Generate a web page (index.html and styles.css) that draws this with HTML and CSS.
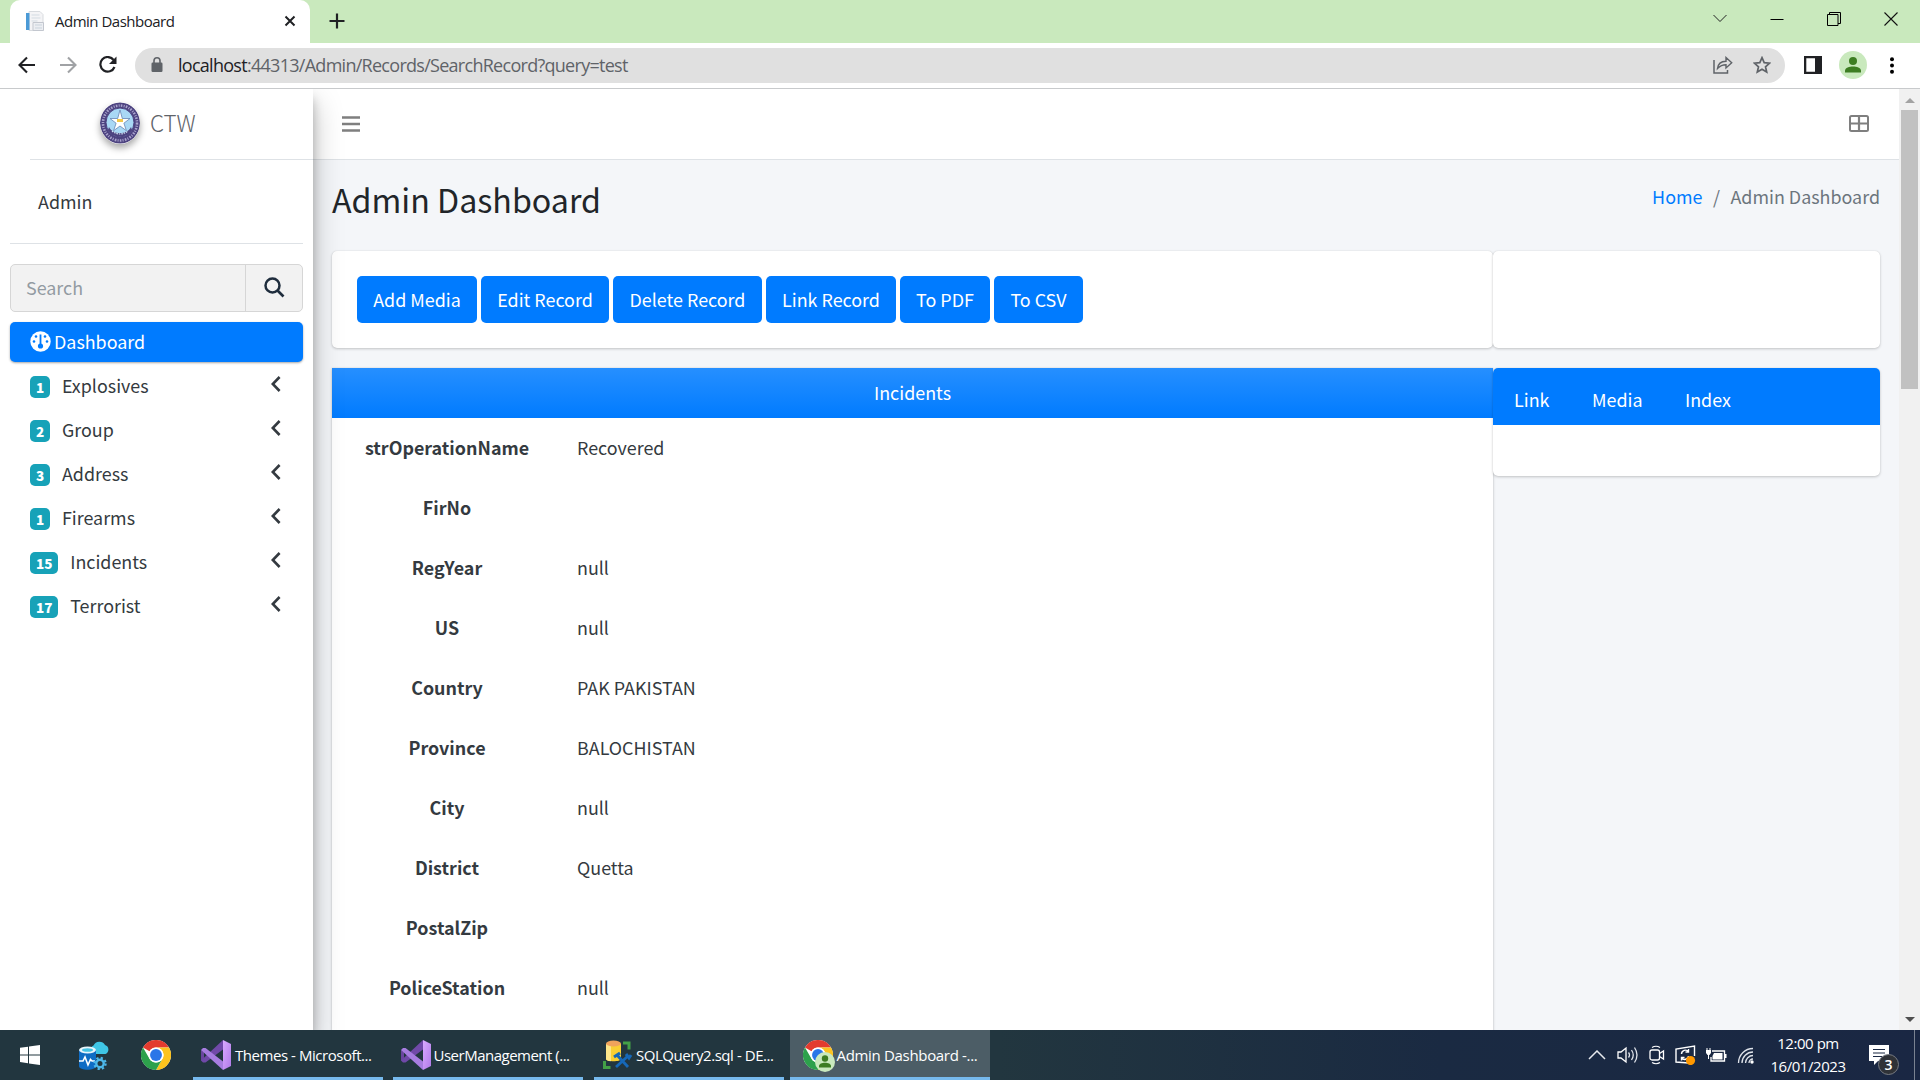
FILE: index.html
```html
<!DOCTYPE html>
<html lang="en">
<head>
<meta charset="utf-8">
<title>Admin Dashboard</title>
<link rel="stylesheet" href="styles.css">
</head>
<body>
<svg class="defs" width="0" height="0">
  <defs>
    <linearGradient id="vs" x1="0" y1="0" x2="1" y2="1"><stop offset="0" stop-color="#d9a9ff"/><stop offset="1" stop-color="#b07ae8"/></linearGradient>
    <symbol id="chrome" viewBox="0 0 48 48">
      <circle cx="24" cy="24" r="24" fill="#fff"/>
      <path d="M3.2 12A24 24 0 0 1 44.8 12H24a12 12 0 0 0-10.4 6z" fill="#e33b2e"/>
      <path d="M44.8 12A24 24 0 0 1 24 48l10.4-18A12 12 0 0 0 34.4 18 12 12 0 0 0 24 12z" fill="#fcc31e"/>
      <path d="M24 48A24 24 0 0 1 3.2 12l10.4 18A12 12 0 0 0 34.4 30z" fill="#2da14c"/>
      <circle cx="24" cy="24" r="12" fill="#fff"/><circle cx="24" cy="24" r="9.5" fill="#2a76e8"/>
    </symbol>
    <symbol id="vstudio" viewBox="0 0 30 30">
      <path d="M0 10l3 2v7l-3 2z" fill="#6a45a0"/>
      <path d="M0 20.500L22 0v9.500L4.500 22.500 2 22.500z" fill="#7049a8"/>
      <path d="M0 10l2-2h2.500L22 21.500V30z" fill="#a77de0"/>
      <path d="M22 0l8 4v22l-8 4z" fill="url(#vs)"/>
    </symbol>
    <symbol id="chev" viewBox="0 0 10 16"><path d="M8.6 1L1.8 8l6.8 7" fill="none" stroke="#343a40" stroke-width="2.6"/></symbol>
  </defs>
</svg>

<header class="tabstrip">
  <div class="tab">
    <svg class="favicon" width="20" height="20" viewBox="0 0 20 20"><path d="M4 .5h11l3 3v16H4z" fill="#f4f4f6" stroke="#d8dbdf"/><path d="M1 2h3.500v17H1z" fill="#4b9ad6"/><path d="M6.500 4h8M6.500 7h9M6.500 10h6" stroke="#d3dbe2"/><path d="M8 11.500h10.500v8H8z" fill="#eceef2" stroke="#c3c7cf"/><path d="M10 14h7M10 17h7" stroke="#c9d3dc"/></svg>
    <span class="tab-title">Admin Dashboard</span>
    <svg width="12" height="12" viewBox="0 0 12 12"><path d="M1.500 1.500l9 9m0-9l-9 9" stroke="#202124" stroke-width="2"/></svg>
  </div>
  <svg class="newtab" width="16" height="16" viewBox="0 0 16 16"><path d="M8 .5v15M.5 8h15" stroke="#202124" stroke-width="2.200"/></svg>
  <div class="winbtns">
    <svg width="14" height="9" viewBox="0 0 14 9"><path d="M.5 1l6.500 6.500L13.500 1" fill="none" stroke="#222"/></svg>
    <svg width="14" height="14" viewBox="0 0 14 14"><path d="M.5 7.500h13" stroke="#000"/></svg>
    <svg width="14" height="14" viewBox="0 0 14 14"><path d="M.5 2.500h10.500v11H.5zM2.500 2.500v-2h11v11h-2.500" fill="none" stroke="#000"/></svg>
    <svg width="14" height="14" viewBox="0 0 14 14"><path d="M.5.5l13 13m0-13l-13 13" stroke="#111" stroke-width="1.100"/></svg>
  </div>
</header>

<div class="toolbar">
  <svg width="18" height="18" viewBox="0 0 18 18"><path d="M17 9H2M9 1.500L1.500 9 9 16.500" fill="none" stroke="#202124" stroke-width="2.100"/></svg>
  <svg width="18" height="18" viewBox="0 0 18 18"><path d="M1 9h15M9 1.500L16.500 9 9 16.500" fill="none" stroke="#a0a2a5" stroke-width="2.100"/></svg>
  <svg class="reload" width="18" height="18" viewBox="0 0 18 18"><path d="M15.500 11A7.300 7.300 0 1 1 14.600 4" fill="none" stroke="#202124" stroke-width="2.200"/><path d="M17.500.5v7.500H10z" fill="#202124"/></svg>
  <div class="omnibox">
    <svg width="12" height="16" viewBox="0 0 12 16"><rect x=".5" y="5.500" width="11" height="9.500" rx="1.200" fill="#5f6368"/><path d="M3 6V3.800a3 3 0 0 1 6 0V6" fill="none" stroke="#5f6368" stroke-width="1.600"/></svg>
    <span class="url"><b>localhost</b>:44313/Admin/Records/SearchRecord?query=test</span>
    <svg class="share" width="20" height="18" viewBox="0 0 20 18"><path d="M1 4v13h13.500v-3" fill="none" stroke="#5f6368" stroke-width="1.500"/><path d="M4.500 12.500C5 8 8 5.500 13 5.300V1.500l5.700 5.200-5.700 5.200V8.800C9 8.800 7 10 4.500 12.500z" fill="none" stroke="#5f6368" stroke-width="1.400"/></svg>
    <svg width="18" height="18" viewBox="0 0 18 18"><path d="M9 1.700l2.200 5 5.400.5-4.100 3.600 1.200 5.300L9 13.300l-4.700 2.800 1.200-5.300L1.400 7.200l5.400-.5z" fill="none" stroke="#5f6368" stroke-width="1.700"/></svg>
  </div>
  <svg class="panel" width="18" height="18" viewBox="0 0 18 18"><path d="M0 0h18v18H0zM2.300 2.300v13.400h8.700V2.300z" fill="#202124" fill-rule="evenodd"/></svg>
  <svg class="user" width="28" height="28" viewBox="0 0 28 28"><circle cx="14" cy="14" r="14" fill="#c9e9bd"/><circle cx="14" cy="10" r="4" fill="#3d7d22"/><path d="M6 21.500v-1.700c0-3 4.500-4.300 8-4.300s8 1.300 8 4.300v1.700z" fill="#3d7d22"/></svg>
  <svg class="dots" width="4" height="17" viewBox="0 0 4 17"><circle cx="2" cy="2.200" r="2"/><circle cx="2" cy="8.500" r="2"/><circle cx="2" cy="14.800" r="2"/></svg>
</div>

<div class="viewport">
  <aside class="sidebar">
    <div class="brand">
      <svg class="logo" width="40" height="42" viewBox="0 0 40 42">
        <ellipse cx="20" cy="21" rx="20" ry="20.500" fill="#4d4380"/>
        <ellipse cx="20" cy="21" rx="17" ry="17.500" fill="none" stroke="#a9a3cc" stroke-width="2.600" stroke-dasharray="1.600 1.300 1 1.200"/>
        <ellipse cx="20" cy="20.500" rx="14" ry="14.500" fill="#a9d8f5" stroke="#4d4380"/>
        <path d="M9 25c4 8 18 8 22 0l1 3c-5 9-19 9-24 0z" fill="#4d4380"/>
        <path d="M12 29c5 4 11 4 16 0" fill="none" stroke="#d5e7f5" stroke-width="1.200" stroke-dasharray="1.500 1"/>
        <path d="M20 8l2.300 8.500H30l-6.100 4.700 2.500 7.500L20 24l-6.400 4.700 2.500-7.500L10 16.500h7.700z" fill="#fff" stroke="#6686b5" stroke-width=".8"/>
        <path d="M17 17h6v3h-6z" fill="#f1c84c"/>
      </svg>
      <span>CTW</span>
    </div>
    <div class="side-body">
      <div class="who">Admin</div>
      <div class="search"><span>Search</span><i><svg width="21" height="21" viewBox="0 0 21 21"><circle cx="8.500" cy="8.500" r="7" fill="none" stroke="#1f2d3d" stroke-width="2.500"/><path d="M13.500 13.500l6 6" stroke="#1f2d3d" stroke-width="2.700"/></svg></i></div>
      <nav>
        <a class="item active"><svg width="21" height="21" viewBox="0 0 21 21"><circle cx="10.500" cy="10.500" r="10.200" fill="#fff"/><g fill="#007bff"><circle cx="6" cy="5.500" r="1.300"/><circle cx="15" cy="5.500" r="1.300"/><circle cx="4" cy="10.500" r="1.300"/><circle cx="17" cy="10.500" r="1.300"/><circle cx="10.500" cy="15" r="2.600"/><path d="M9.600 3.500h1.800V14H9.600z"/></g></svg><span>Dashboard</span></a>
        <a class="item"><em>1</em><span>Explosives</span><svg class="chev"><use href="#chev"/></svg></a>
        <a class="item"><em>2</em><span>Group</span><svg class="chev"><use href="#chev"/></svg></a>
        <a class="item"><em>3</em><span>Address</span><svg class="chev"><use href="#chev"/></svg></a>
        <a class="item"><em>1</em><span>Firearms</span><svg class="chev"><use href="#chev"/></svg></a>
        <a class="item"><em>15</em><span>Incidents</span><svg class="chev"><use href="#chev"/></svg></a>
        <a class="item"><em>17</em><span>Terrorist</span><svg class="chev"><use href="#chev"/></svg></a>
      </nav>
    </div>
  </aside>

  <main class="main">
    <div class="navbar">
      <svg width="18" height="16" viewBox="0 0 18 16"><path d="M.5 1.500h17M.5 8h17M.5 14.500h17" stroke="#7f7f7f" stroke-width="2.500" stroke-linecap="round"/></svg>
      <svg width="20" height="17" viewBox="0 0 20 17"><rect x="1" y="1" width="18" height="15" rx="1.500" fill="none" stroke="#7f7f7f" stroke-width="2"/><path d="M10 1v15M1 8.500h18" stroke="#7f7f7f" stroke-width="2.200"/></svg>
    </div>
    <div class="content">
      <div class="heading">
        <h1>Admin Dashboard</h1>
        <div class="crumbs"><a>Home</a><i>/</i><span>Admin Dashboard</span></div>
      </div>
      <div class="row top">
        <section class="card actions">
          <button>Add Media</button><button>Edit Record</button><button>Delete Record</button><button>Link Record</button><button>To PDF</button><button>To CSV</button>
        </section>
        <section class="card"></section>
      </div>
      <div class="row">
        <section class="card record">
          <h2>Incidents</h2>
          <dl>
            <dt>strOperationName</dt><dd>Recovered</dd>
            <dt>FirNo</dt><dd></dd>
            <dt>RegYear</dt><dd>null</dd>
            <dt>US</dt><dd>null</dd>
            <dt>Country</dt><dd>PAK PAKISTAN</dd>
            <dt>Province</dt><dd>BALOCHISTAN</dd>
            <dt>City</dt><dd>null</dd>
            <dt>District</dt><dd>Quetta</dd>
            <dt>PostalZip</dt><dd></dd>
            <dt>PoliceStation</dt><dd>null</dd>
          </dl>
        </section>
        <section class="card links">
          <div class="links-head"><a>Link</a><a>Media</a><a>Index</a></div>
        </section>
      </div>
    </div>
  </main>

  <div class="scrollbar">
    <svg width="10" height="5" viewBox="0 0 10 5"><path d="M0 5l5-5 5 5z" fill="#a3a3a3"/></svg>
    <div class="thumb"></div>
    <svg width="10" height="5" viewBox="0 0 10 5"><path d="M0 0l5 5 5-5z" fill="#505050"/></svg>
  </div>
</div>

<footer class="taskbar">
  <div class="pinned">
    <svg width="20" height="20" viewBox="0 0 20 20"><path d="M0 2.800L8 1.700v7.700H0zM9 1.500L20 0v9.400H9zM0 10.400h8v7.800l-8-1.100zM9 10.400h11V20L9 18.400z" fill="#fff"/></svg>
    <svg width="31" height="30" viewBox="0 0 31 30"><path d="M15 14a4.500 4.500 0 0 1-.5-8.500A6.500 6.500 0 0 1 26 5a4.800 4.800 0 0 1 .5 9z" fill="#3fc6e6"/><path d="M0 10v16c0 5 17 5 17 0V10z" fill="#0f6cc4"/><ellipse cx="8.500" cy="10" rx="8.500" ry="3.500" fill="#e8f5fb"/><ellipse cx="8.500" cy="10" rx="5.500" ry="1.800" fill="#45c2e4"/><path d="M0 21h4l2-4 3 8 2.500-5.500L13 21h3" fill="none" stroke="#fff" stroke-width="1.600"/><circle cx="21" cy="23.500" r="3.700" fill="#22363f" stroke="#4db8ea" stroke-width="2.400"/><circle cx="21" cy="23.500" r="5.600" fill="none" stroke="#4db8ea" stroke-width="2.200" stroke-dasharray="2.200 2.200"/></svg>
    <svg width="30" height="30"><use href="#chrome"/></svg>
  </div>
  <div class="task"><svg width="30" height="30"><use href="#vstudio"/></svg><span class="t1">Themes - Microsoft...</span></div>
  <div class="task second"><svg width="30" height="30"><use href="#vstudio"/></svg><span class="t2">UserManagement (...</span></div>
  <div class="task"><svg width="31" height="34" viewBox="0 0 31 34"><path d="M21 5h6v6.500M8.500 29.500H2.500V23" fill="none" stroke="#43a047" stroke-width="3"/><path d="M4 6v15c0 3 15 3 15 0V6z" fill="#f9cf33"/><path d="M4 6v15c0 1 2 2 5 2.200V6z" fill="#fde58a"/><ellipse cx="11.500" cy="5.500" rx="7.500" ry="3" fill="#f0a35c"/><path d="M14 29L26 18M15 17l11 12" stroke="#1668b8" stroke-width="2.800"/><path d="M12 19l6-4M24 16l3 4 2-3" stroke="#1668b8" stroke-width="3" fill="none"/></svg><span class="t3">SQLQuery2.sql - DE...</span></div>
  <div class="task current"><svg width="33" height="34" viewBox="0 0 33 34"><use href="#chrome" x="0" y="2" width="30" height="30"/><circle cx="22" cy="24" r="10" fill="#c9e9bd"/><circle cx="22" cy="20.500" r="3.200" fill="#3d7d22"/><path d="M16 29.500v-1.500c0-4.500 12-4.500 12 0v1.500z" fill="#3d7d22"/></svg><span class="t4">Admin Dashboard -...</span></div>
  <div class="tray">
    <svg width="18" height="10" viewBox="0 0 18 10"><path d="M1 9l8-8 8 8" fill="none" stroke="#e8eaee" stroke-width="1.500"/></svg>
    <svg width="22" height="18" viewBox="0 0 22 18"><path d="M1 6h3l5-4v14l-5-4H1z" fill="none" stroke="#fff" stroke-width="1.300"/><path d="M11.500 6.500q2 2.500 0 5M14.500 4q3.500 5 0 10M17.500 1.500q5 7.500 0 15" fill="none" stroke="#dfe3ea" stroke-width="1.300"/></svg>
    <svg width="16" height="20" viewBox="0 0 16 20"><path d="M3 2.500Q7 0 11 2.500M3 17.500q4 2.500 8 0" fill="none" stroke="#fff" stroke-width="1.200"/><rect x="1" y="5" width="9.500" height="10" rx="2" fill="none" stroke="#fff" stroke-width="1.300"/><path d="M10.500 8.500L14.500 6v8l-4-2.500" fill="none" stroke="#fff" stroke-width="1.300"/></svg>
    <svg width="21" height="20" viewBox="0 0 21 20"><path d="M14 18L1 17V4l18.500-3v10" fill="none" stroke="#fff" stroke-width="1.400"/><path d="M6.500 9a4 4 0 0 1 7-2.500M13.500 4v3h-3M13.500 11a4 4 0 0 1-7 2M6.500 15.500v-3h3" fill="none" stroke="#fff" stroke-width="1.400"/><circle cx="15.500" cy="15.500" r="4.600" fill="#ff9800"/></svg>
    <svg width="21" height="14" viewBox="0 0 21 14"><path d="M6 3h12.500v10H5V9" fill="none" stroke="#fff" stroke-width="1.300"/><path d="M8 5h8.500v6.500H6.500V8zM19 6h1.500v4H19zM0 2h5v3L3.500 7h-2L0 5zM.5 0h1v2h-1zM3.500 0h1v2h-1zM2 7h1v4H2z" fill="#fff"/></svg>
    <svg width="18" height="17" viewBox="0 0 18 17"><path d="M1.500 16C1.500 8 8 1.500 16 1.500M5 16C5 10 10 5 16 5M8.500 16c0-4 3.500-7.500 7.500-7.500M12 16c0-2 1.500-4 4-4" fill="none" stroke="#dfe3ea" stroke-width="1.300"/><circle cx="15" cy="15" r="1.700" fill="#fff"/></svg>
    <div class="clock"><span>12:00 pm</span><span>16/01/2023</span></div>
    <svg width="32" height="30" viewBox="0 0 32 30"><path d="M0 0h20v16H9l-4 4v-4H0z" fill="#fff"/><path d="M4 4.500h12M4 8h12M4 11.500h9" stroke="#1a2843" stroke-width="1.200"/><circle cx="19.500" cy="19.500" r="10" fill="#2f3237" stroke="#777b82"/><text x="19.500" y="25" class="count">3</text></svg>
    <i class="peek"></i>
  </div>
</footer>
</body>
</html>
```
FILE: styles.css
```css
* { box-sizing: border-box; }
body { margin: 0; width: 1920px; height: 1080px; overflow: hidden; display: flex; flex-direction: column; background: #fff; font-family: "Noto Sans CJK SC", sans-serif; font-size: 17.900px; color: #212529; }
svg { display: block; flex: none; }
i, em { font-style: normal; }
.defs { position: absolute; }

/* browser chrome */
.tabstrip { height: 43px; flex: none; display: flex; background: #c9e9bd; padding-left: 10px; font-family: "Open Sans", sans-serif; }
.tab { width: 300px; height: 43px; background: #fff; border-radius: 10px 10px 0 0; display: flex; align-items: center; padding: 0 14px 1px 15px; }
.tab-title { flex: 1; margin: -1px 0 0 10px; font-size: 15px; letter-spacing: -.5px; white-space: nowrap; color: #202124; }
.newtab { margin: 13px 0 0 19px; }
.winbtns { margin-left: auto; height: 37px; display: flex; align-items: center; gap: 43px; padding-right: 22px; }
.toolbar { height: 46px; flex: none; display: flex; align-items: center; border-bottom: 1px solid #c8cacc; padding: 0 26px 1px 18px; gap: 23px; }
.reload { margin: 0 1px 0 -1px; }
.omnibox { width: 1650px; height: 35px; border-radius: 18px; background: #e0e0e0; display: flex; align-items: center; padding: 0 14px 0 16px; margin-left: -6px; flex: none; }
.url { font-family: "Open Sans", sans-serif; font-size: 18px; letter-spacing: -.72px; color: #5f6368; margin-left: 15px; white-space: nowrap; }
.url b { font-weight: 400; color: #202124; }
.share { margin: 0 20px 0 auto; }
.panel { margin-left: -4px; }
.user { margin-left: -6px; }

/* page */
.viewport { height: 941px; flex: none; display: flex; overflow: hidden; }
.sidebar { width: 313px; background: #fff; box-shadow: 0 14px 28px rgba(0,0,0,.25), 0 10px 10px rgba(0,0,0,.22); z-index: 2; clip-path: inset(0 -60px 0 0); }
.brand { height: 71px; margin-left: 30px; border-bottom: 1px solid #dee2e6; display: flex; align-items: center; padding: 0 0 3px 70px; font-size: 22.400px; line-height: 40px; font-weight: 300; color: #5f646a; }
.brand span { margin-top: -2px; }
.logo { border-radius: 50%; box-shadow: 0 4px 7px rgba(0,0,0,.35); margin-right: 10px; }
.side-body { padding: 0 10px; }
.who { height: 84px; padding-left: 28px; line-height: 82px; border-bottom: 1px solid #dee2e6; color: #343a40; }
.search { margin-top: 20px; height: 48px; border: 1px solid #d6d6d6; border-radius: 5px; background: #f2f2f2; display: flex; line-height: 45px; color: #939ba2; }
.search span { flex: 1; padding-left: 15px; }
.search i { width: 57px; border-left: 1px solid #d6d6d6; display: flex; align-items: center; padding: 0 0 1px 18px; }
nav { margin-top: 10px; display: flex; flex-direction: column; gap: 4px; }
.item { height: 40px; display: flex; align-items: center; padding: 0 22px 0 20px; color: #343a40; line-height: 36px; }
.item > span { margin-top: -3px; }
.item em { height: 22px; margin-top: 2px; padding: 0 6px; border-radius: 5px; background: #17a2b8; color: #fff; font-size: 13.500px; font-weight: 900; line-height: 23px; margin-right: 11.700px; min-width: 20px; text-align: center; }
.item.active { background: #007bff; color: #fff; border-radius: 5px; box-shadow: 0 1px 3px rgba(0,0,0,.12), 0 1px 2px rgba(0,0,0,.24); }
.item.active svg { margin-top: -2px; }
.item.active span { margin-left: 3px; }
.chev { width: 10px; height: 16px; margin: 0 0 5px auto; }
.main { flex: 1; background: #f4f6f9; min-width: 0; }
.navbar { height: 71px; background: #fff; border-bottom: 1px solid #dee2e6; display: flex; align-items: center; justify-content: space-between; padding: 0 30px 1px 29px; }
.content { padding: 0 19px; }
.heading { height: 91px; display: flex; justify-content: space-between; }
h1 { margin: 0; font-size: 32.200px; font-weight: 400; line-height: 78px; }
.crumbs { display: flex; line-height: 72px; color: #6c757d; }
.crumbs a { color: #007bff; }
.crumbs i { margin: 0 10.500px; }
.row { display: flex; align-items: flex-start; }
.card { background: #fff; border-radius: 5px; box-shadow: 0 0 1px rgba(0,0,0,.125), 0 1px 3px rgba(0,0,0,.2); width: 387px; }
.top { margin-bottom: 20px; }
.top .card { height: 97px; }
.card.actions, .card.record { width: 1161px; }
.actions { display: flex; gap: 4px; padding: 25px; }
button { height: 47px; padding: 0 0 1px; border: 0; border-radius: 5px; background: #007bff; color: #fff; font: 17.900px "Noto Sans CJK SC", sans-serif; width: 120px; }
button:nth-child(2) { width: 128px; }
button:nth-child(3) { width: 149px; }
button:nth-child(4) { width: 130px; }
button:nth-child(5) { width: 90px; }
button:nth-child(6) { width: 89px; }
.card.record { height: 700px; border-radius: 0; }
h2 { margin: 0; height: 50px; background: linear-gradient(#268fff, #007bff); color: #fff; font-size: 17.900px; font-weight: 400; text-align: center; line-height: 49px; }
dl { margin: 0; display: grid; grid-template-columns: 229px 1fr; grid-auto-rows: 60px; line-height: 59px; }
dt { text-align: center; font-weight: 700; color: #343a40; padding-left: 1px; }
dd { margin: 0; padding-left: 16px; color: #343a40; }
.links { height: 108px; }
.links-head { height: 57px; background: #007bff; border-radius: 5px 5px 0 0; color: #fff; display: flex; gap: 42.500px; padding-left: 21px; line-height: 62px; }
.scrollbar { width: 21px; background: #f1f1f1; display: flex; flex-direction: column; align-items: center; padding: 9px 0 8px; }
.thumb { width: 17px; height: 279px; background: #c1c1c1; margin: 7px 0 auto; }

/* taskbar */
.taskbar { height: 50px; flex: none; display: flex; background: linear-gradient(90deg, #22363f 0, #22363f 52%, #1a2a42 75%, #1a2743); color: #fff; font-family: "Open Sans", sans-serif; font-size: 15px; }
.pinned { width: 193px; flex: none; display: flex; align-items: center; padding-left: 20px; }
.pinned svg:nth-child(2) { margin: 0 31px 0 39px; }
.task { width: 190px; flex: none; margin-right: 10.500px; height: 50px; border-bottom: 3px solid #76b9ed; display: flex; align-items: center; padding: 3px 0 0 8px; white-space: nowrap; }
.task span { margin: -1px 0 0 4px; letter-spacing: -.45px; }
.task.second { margin: 0 11.500px 0 -1px; }
.task .t2 { margin-left: 3px; letter-spacing: -.5px; }
.task .t3 { margin-left: 3px; letter-spacing: -.45px; }
.task.current { width: 200px; background: #4c5d66; margin-left: -5px; padding-left: 13px; }
.task.current span { margin-left: 1px; letter-spacing: -.32px; }
.tray { margin-left: auto; display: flex; align-items: center; }
.tray svg { margin-right: 10px; }
.tray svg:nth-of-type(1) { margin-right: 11px; }
.clock { width: 94px; margin: 0 14px 0 -4px; display: flex; flex-direction: column; align-items: center; line-height: 23px; letter-spacing: -.45px; padding-bottom: 1px; }
.tray svg:nth-of-type(7) { margin-top: 9px; }
.count { font: 600 14px "Open Sans", sans-serif; fill: #fff; text-anchor: middle; }
.peek { width: 1px; height: 50px; background: #7a8290; margin: 0 5px 0 3px; }
```
